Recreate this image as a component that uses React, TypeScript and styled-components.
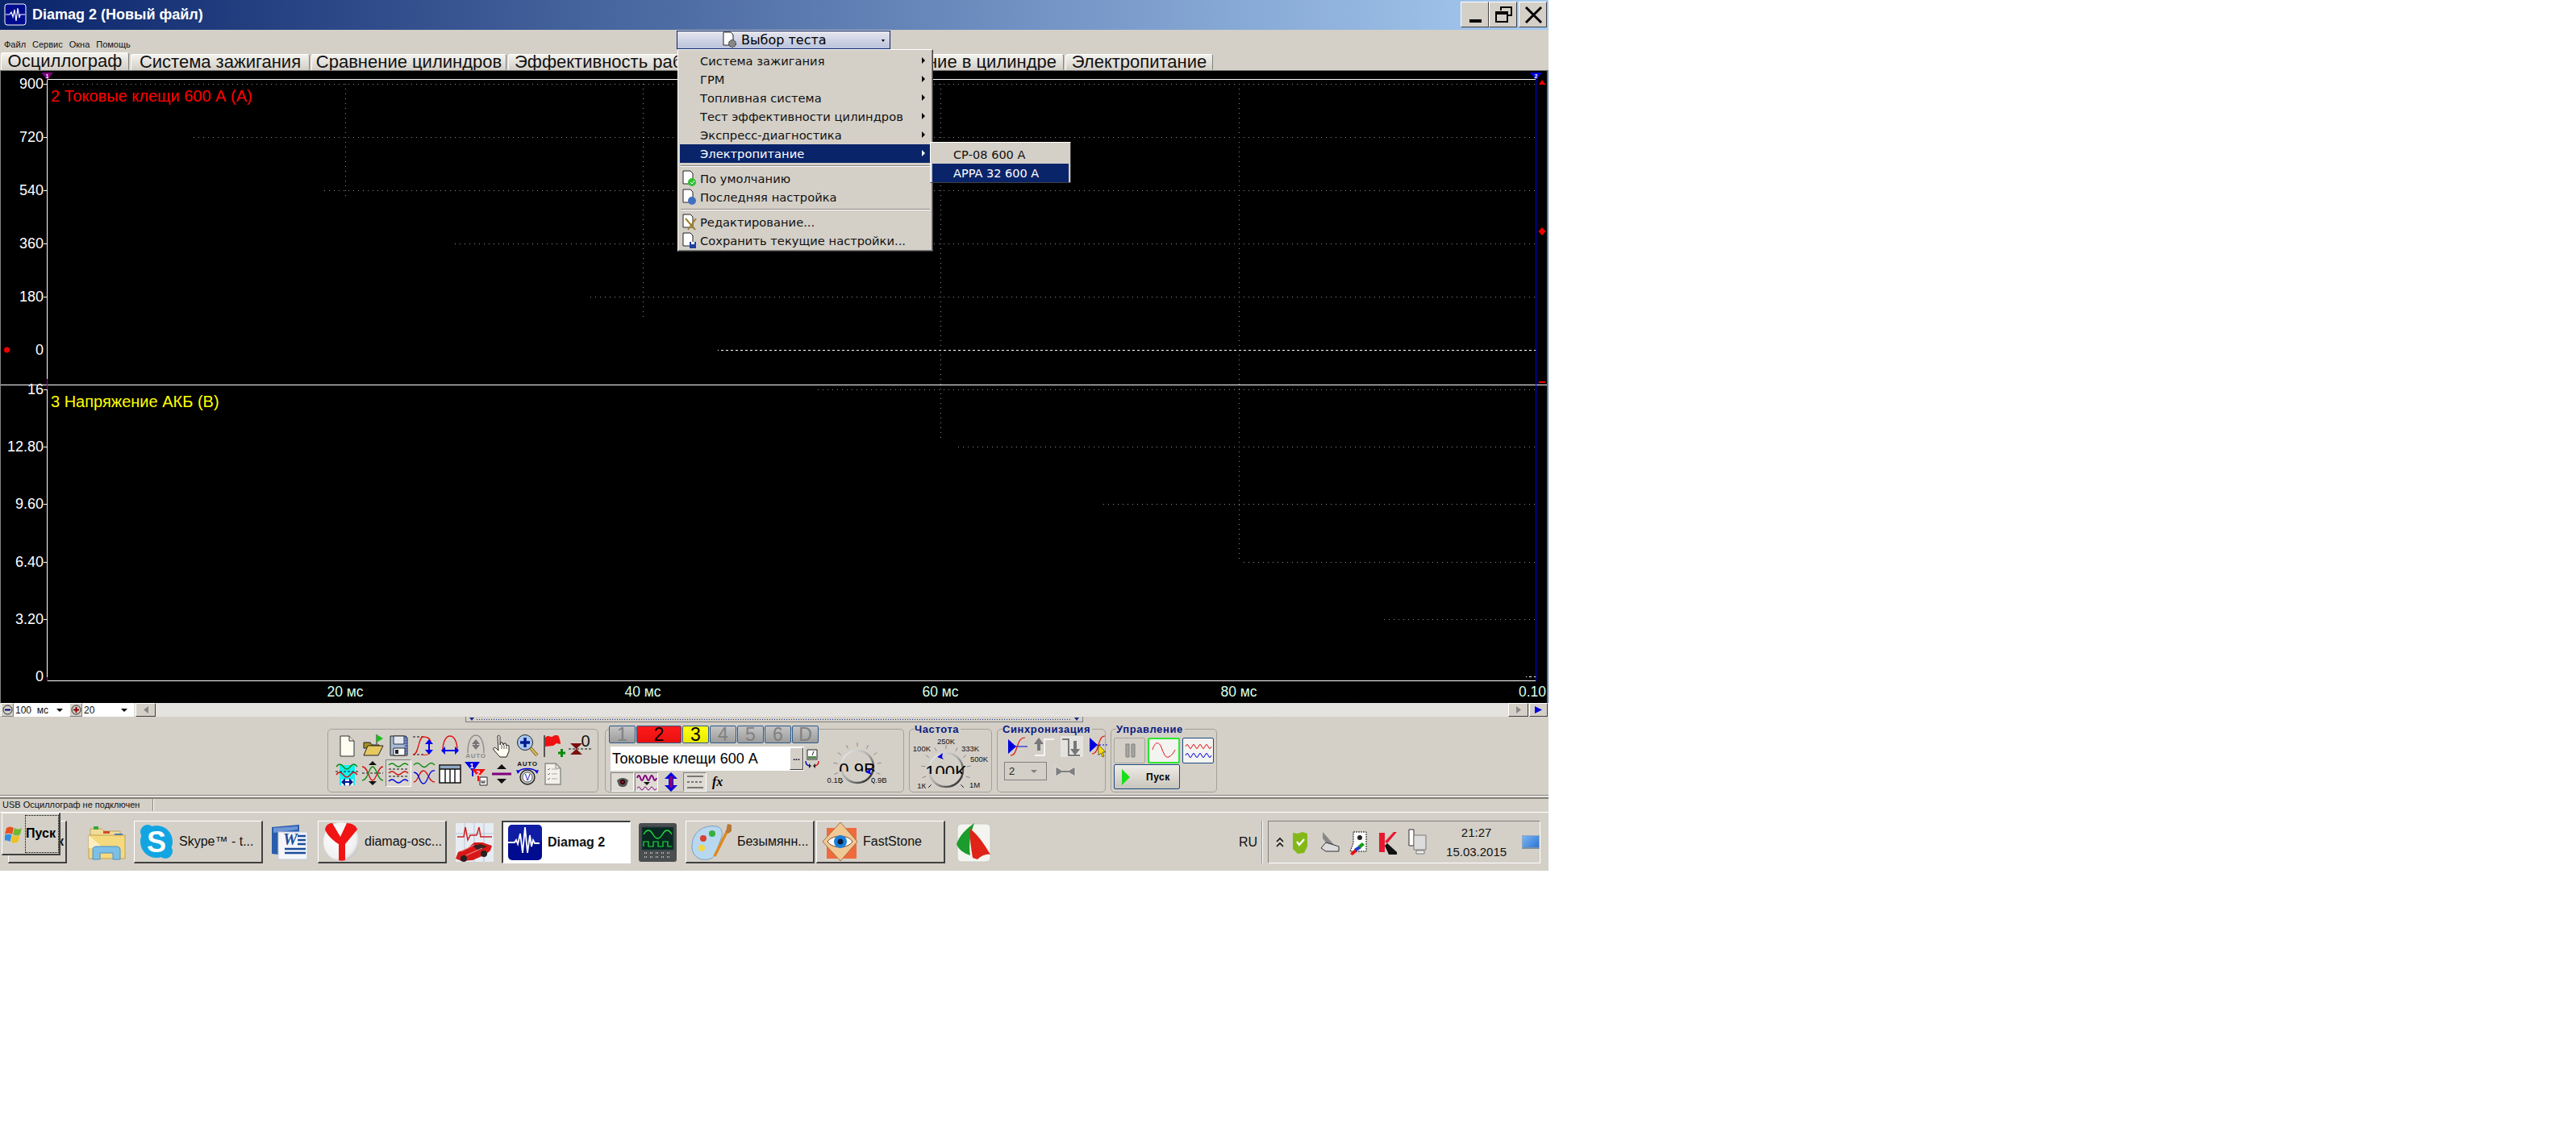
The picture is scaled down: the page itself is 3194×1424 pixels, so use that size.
import React from "react";
import styled, { createGlobalStyle } from "styled-components";

const GREY = "#d4d0c8";
const NAVY = "#0a246a";

const GRID_X = [428, 797, 1166, 1536];
const GRID_Y = [104, 170, 236, 302, 368, 483, 554, 625, 697, 768];
const ZERO_Y = [434, 839];

// dotted chart grid as background layers; offsets are relative to the chart's top-left (1, 88)
const gridLayers = [
  ...ZERO_Y.map(
    (y) => `repeating-linear-gradient(to right, #fff 0 3px, transparent 3px 6px) 59px ${y - 88}px / 1844px 1px no-repeat`
  ),
  ...GRID_X.map(
    (x) => `repeating-linear-gradient(to bottom, #8c8c8c 0 1px, transparent 1px 6px) ${x - 1}px 16px / 1px 744px no-repeat`
  ),
  ...GRID_Y.map(
    (y) => `repeating-linear-gradient(to right, #8c8c8c 0 1px, transparent 1px 6px) 59px ${y - 88}px / 1844px 1px no-repeat`
  ),
].join(", ");

const GlobalStyle = createGlobalStyle`
  html, body { margin: 0; background: #fff; }
  * { box-sizing: border-box; }
`;

const Page = styled.div`
  position: relative;
  width: 1920px;
  height: 1080px;
  background: ${GREY};
  font-family: "Liberation Sans", Arial, sans-serif;
  overflow: hidden;
  display: flex;
  flex-direction: column;
`;

const TitleBar = styled.div`
  height: 37px;
  padding: 2px 2px 3px 5px;
  display: flex;
  align-items: center;
  background: linear-gradient(to right, ${NAVY}, #a6caf0);
  color: #fff;
`;

const TitleText = styled.span`
  margin-left: 7px;
  font-size: 18px;
  font-weight: 700;
  flex: 1;
`;

const WinButton = styled.button<{ $gap?: number }>`
  width: 35px;
  height: 32px;
  margin-left: ${(p) => p.$gap ?? 0}px;
  padding: 0;
  display: flex;
  align-items: center;
  justify-content: center;
  background: ${GREY};
  border: 1px solid;
  border-color: #fff #404040 #404040 #fff;
`;

const MenuBar = styled.div`
  height: 28px;
  display: flex;
  padding-top: 1px;
`;

const MenuItems = styled.div`
  width: 839px;
  padding: 9px 0 0 5px;
  display: flex;
  gap: 8px;
  font-size: 11px;
  line-height: 16px;
  color: #111;
`;

const TestButton = styled.div`
  width: 265px;
  height: 23px;
  display: flex;
  align-items: center;
  padding-left: 55px;
  gap: 2px;
  border: 1px solid ${NAVY};
  background: linear-gradient(to bottom, #e6e6ee, #b9c2dc);
  font: 16px "DejaVu Sans", sans-serif;
  color: #000;
  position: relative;
  white-space: nowrap;
`;

const TinyArrow = styled.span`
  position: absolute;
  right: 6px;
  top: 10px;
  border: 2.5px solid transparent;
  border-top: 3px solid #000;
`;

const TabRow = styled.div`
  height: 22px;
  display: flex;
  align-items: flex-end;
  padding-left: 1px;
  gap: 2px;
`;

const Tab = styled.div<{ $w: number; $active?: boolean; $align?: string }>`
  width: ${(p) => p.$w}px;
  height: ${(p) => (p.$active ? 22 : 20)}px;
  display: flex;
  align-items: center;
  justify-content: ${(p) => p.$align ?? "center"};
  padding: ${(p) => (p.$align === "flex-end" ? "0 8px 0 0" : p.$align ? "0 0 0 7px" : "0")};
  border: 1px solid;
  border-color: #fff #808080 ${GREY} #fff;
  border-radius: 3px 3px 0 0;
  background: linear-gradient(to bottom, #f4f3ef, #d4d0c8);
  font-size: 22px;
  line-height: 20px;
  color: #111;
  white-space: nowrap;
`;

const ChartBox = styled.div`
  height: 785px;
  background: ${gridLayers}, #000;
  border-top: 1px solid #6f6f6f;
  border-left: 1px solid #808080;
  border-right: 2px solid #5b7fa6;
  display: block;
`;

const ScrollRow = styled.div`
  height: 17px;
  display: flex;
  background: repeating-conic-gradient(#ffffff 0 25%, #c9c6bf 0 50%) 0 0 / 2px 2px;
  padding-left: 1px;
  padding-right: 1px;
`;

const RoundBtn = styled.div`
  width: 16px;
  height: 17px;
  background: ${GREY};
  border: 1px solid;
  border-color: #fff #808080 #808080 #fff;
  display: flex;
  align-items: center;
  justify-content: center;
`;

const ZoomCombo = styled.div<{ $w: number }>`
  width: ${(p) => p.$w}px;
  height: 17px;
  background: #fff;
  display: flex;
  align-items: center;
  padding: 0 8px 0 2px;
  font-size: 12px;
  color: #111;
`;

const ComboValue = styled.span`
  flex: 1;
  white-space: pre;
`;

const ComboArrow = styled.span<{ $c?: string }>`
  width: 0;
  height: 0;
  border: 4px solid transparent;
  border-top: 4px solid ${(p) => p.$c ?? "#000"};
  border-bottom: 0;
`;

const ScrollBtn = styled.div<{ $w?: number; $gap?: number }>`
  width: ${(p) => p.$w ?? 25}px;
  height: 17px;
  margin-left: ${(p) => p.$gap ?? 0}px;
  background: ${GREY};
  border: 1px solid;
  border-color: #fff #404040 #404040 #fff;
  display: flex;
  align-items: center;
  justify-content: center;
`;

const ScrollSpace = styled.div`
  flex: 1;
`;

const Toolbar = styled.div`
  height: 98px;
  border-bottom: 1px solid #807d78;
  box-shadow: 0 1px 0 #fff, 0 2px 0 ${GREY}, 0 3px 0 #807d78;
`;

const Strip = styled.div`
  margin-left: 577px;
  width: 766px;
  height: 7px;
  border: 1px solid #808080;
  border-top: 0;
  background: ${GREY};
  display: flex;
  align-items: center;
  justify-content: space-between;
  padding: 0 4px;
`;

const StripDots = styled.div`
  flex: 1;
  margin: 0 3px;
  height: 1px;
  background: repeating-linear-gradient(to right, #1a3c9a 0 1px, transparent 1px 3px);
`;

const StripMark = styled.span`
  width: 0;
  height: 0;
  border: 3px solid transparent;
  border-top: 4px solid #1a2a8a;
  border-bottom: 0;
`;

const Groups = styled.div`
  margin-top: 8px;
  padding-left: 406px;
  display: flex;
  gap: 6px;
`;

const Group = styled.div<{ $w: number; $after?: number }>`
  position: relative;
  width: ${(p) => p.$w}px;
  height: 79px;
  margin-right: ${(p) => p.$after ?? 0}px;
  border: 1px solid #a4a19a;
  border-radius: 5px;
`;

const Legend = styled.span`
  position: absolute;
  left: 6px;
  top: -8px;
  background: ${GREY};
  padding-right: 2px;
  font-size: 13px;
  line-height: 15px;
  font-weight: 700;
  letter-spacing: 0.6px;
  color: #0b1a80;
  white-space: nowrap;
`;

const IconGrid = styled.div`
  display: grid;
  grid-template-columns: repeat(10, 32px);
  grid-auto-rows: 34px;
  padding: 3px 0 0 7px;
`;

const IconCell = styled.div<{ $sunken?: boolean }>`
  display: flex;
  align-items: center;
  justify-content: center;
  ${(p) => p.$sunken && `border: 1px solid; border-color: #808080 #fff #fff #808080; background: #dad7d0;`}
`;

const ChannelWrap = styled.div`
  margin: -5px 0 0 4px;
`;

const Channels = styled.div`
  display: flex;
  gap: 1px;
  height: 22px;
`;

const Channel = styled.div<{ $c?: string; $w?: number }>`
  width: ${(p) => p.$w ?? 33}px;
  border: 1px solid #2c5a8c;
  border-radius: 2px;
  background: ${(p) =>
    p.$c === "red"
      ? "linear-gradient(#ff1a1a,#e81010)"
      : p.$c === "yellow"
      ? "linear-gradient(#ffff10,#eaea00)"
      : "linear-gradient(#c4c4c4,#9c9c9c)"};
  color: ${(p) => (p.$c ? "#000" : "#808080")};
  font-size: 23px;
  line-height: 20px;
  text-align: center;
`;

const SensorRow = styled.div`
  margin: 4px 0 0 2px;
  display: flex;
  align-items: center;
`;

const SensorCombo = styled.div`
  width: 240px;
  height: 30px;
  background: #fff;
  display: flex;
  align-items: center;
  padding: 0 1px 0 2px;
  font-size: 18px;
  color: #000;
`;

const SensorName = styled.span`
  flex: 1;
`;

const DotsBtn = styled.div`
  width: 17px;
  height: 28px;
  background: ${GREY};
  border: 1px solid;
  border-color: #fff #404040 #404040 #fff;
  font-size: 10px;
  font-weight: 700;
  text-align: center;
  line-height: 24px;
`;

const ModeRow = styled.div`
  margin: 2px 0 0 2px;
  display: flex;
  align-items: center;
  gap: 1px;
  height: 24px;
`;

const ModeBtn = styled.div<{ $flat?: boolean; $w?: number }>`
  width: ${(p) => p.$w ?? 29}px;
  height: 24px;
  display: flex;
  align-items: center;
  justify-content: center;
  ${(p) =>
    !p.$flat &&
    `border: 1px solid; border-color: #808080 #fff #fff #808080; background: #dedbd4;`}
`;

const FxLabel = styled.span`
  margin-left: 6px;
  font: italic 700 16px "Liberation Serif", serif;
  color: #000;
`;

const GroupSplit = styled.div`
  display: flex;
  height: 100%;
`;

const Knob = styled.div`
  margin-left: auto;
  margin-right: 7px;
`;

const SyncRow = styled.div`
  display: flex;
  align-items: center;
  padding: 8px 0 0 10px;
  gap: 6px;
`;

const SyncIcon = styled.div<{ $pressed?: boolean }>`
  width: 29px;
  height: 26px;
  display: flex;
  align-items: center;
  justify-content: center;
  ${(p) => p.$pressed && `background: repeating-conic-gradient(#fff 0 25%, #c9c6bf 0 50%) 0 0 / 2px 2px;`}
`;

const SyncRow2 = styled.div`
  display: flex;
  align-items: center;
  padding: 6px 0 0 8px;
  gap: 10px;
`;

const SyncCombo = styled.div`
  width: 53px;
  height: 23px;
  border: 1px solid #808080;
  display: flex;
  align-items: center;
  padding: 0 11px 0 5px;
  font-size: 13px;
  color: #222;
`;

const ControlGrid = styled.div`
  display: grid;
  grid-template-columns: 39px 40px 39px;
  grid-template-rows: 32px 31px;
  gap: 1px 3px;
  padding: 10px 0 0 3px;
`;

const CtlBtn = styled.div<{ $kind?: string }>`
  display: flex;
  align-items: center;
  justify-content: center;
  border-radius: 2px;
  border: ${(p) =>
    p.$kind === "green" ? "2px solid #2ee62e" : p.$kind === "navy" ? "1px solid #1c4a80" : "1px solid #a8a59e"};
  background: ${(p) => (p.$kind ? "#f3f3f1" : GREY)};
`;

const StartBtn = styled.div`
  grid-column: 1 / span 2;
  display: flex;
  align-items: center;
  padding-left: 9px;
  border: 1px solid #1c4a80;
  border-radius: 2px;
  background: linear-gradient(#eeece6, #c8c5bd);
  font-size: 12px;
  font-weight: 700;
  color: #000;
`;

const StartText = styled.span`
  margin-left: 20px;
  letter-spacing: 0.5px;
`;

const StatusBar = styled.div`
  margin-top: 3px;
  height: 16px;
  display: flex;
  font-size: 11px;
  line-height: 15px;
  color: #111;
`;

const StatusCell = styled.div`
  width: 190px;
  padding-left: 3px;
  border-right: 1px solid #8a8780;
  box-shadow: 1px 0 0 #fff;
  border-top: 1px solid #8a8780;
`;

const StatusRest = styled.div`
  flex: 1;
  border-top: 1px solid #8a8780;
`;

const Taskbar = styled.div`
  border-top: 1px solid #fff;
  margin-top: 1px;
  flex: 1;
  display: flex;
  align-items: flex-start;
  padding: 10px 10px 0 10px;
`;

const TaskBtn = styled.div<{ $w?: number; $active?: boolean; $gap?: number }>`
  width: ${(p) => p.$w ?? 160}px;
  height: 53px;
  margin-left: ${(p) => p.$gap ?? 0}px;
  flex: none;
  display: flex;
  align-items: center;
  padding-left: 5px;
  gap: 6px;
  border: 1px solid;
  border-width: ${(p) => (p.$active ? "2px 1px 1px 2px" : "1px 2px 2px 1px")};
  border-color: ${(p) => (p.$active ? "#404040 #fff #fff #404040" : "#fff #404040 #404040 #fff")};
  background: ${(p) => (p.$active ? "#fff" : GREY)};
  font-size: 16px;
  font-weight: ${(p) => (p.$active ? 700 : 400)};
  color: #111;
  white-space: nowrap;
  overflow: hidden;
`;

const BackBtn = styled(TaskBtn)`
  justify-content: flex-end;
  padding-right: 2px;
  font-weight: 700;
  font-size: 16px;
`;

const FreeIcon = styled.div<{ $gap: number; $w: number }>`
  margin-left: ${(p) => p.$gap}px;
  width: ${(p) => p.$w}px;
  height: 53px;
  flex: none;
  display: flex;
  align-items: center;
  justify-content: center;
`;

const WinStart = styled.div`
  position: absolute;
  left: 2px;
  top: 1008px;
  width: 73px;
  height: 53px;
  display: flex;
  align-items: center;
  padding-left: 3px;
  background: ${GREY};
  border: 1px solid;
  border-width: 1px 2px 2px 1px;
  border-color: #fff #404040 #404040 #fff;
  font-size: 16px;
  font-weight: 700;
  color: #000;
`;

const StartLabel = styled.span`
  border: 1px dotted #000;
  height: 47px;
  width: 42px;
  margin-left: 3px;
  display: flex;
  align-items: center;
  white-space: nowrap;
`;

const Lang = styled.div`
  margin-left: auto;
  height: 53px;
  display: flex;
  align-items: center;
  padding-right: 5px;
  border-right: 1px solid #9a978f;
  box-shadow: 1px 0 0 #fff;
  font-size: 16px;
  color: #111;
  width: 29px;
  flex: none;
`;

const Tray = styled.div`
  margin-left: 7px;
  width: 338px;
  height: 53px;
  flex: none;
  display: flex;
  align-items: center;
  padding-left: 9px;
  border: 1px solid;
  border-color: #808080 #fff #fff #808080;
`;

const TraySlot = styled.div<{ $w: number }>`
  width: ${(p) => p.$w}px;
  height: 30px;
  display: flex;
  align-items: center;
  justify-content: center;
  flex: none;
`;

const Clock = styled.div`
  margin-left: 8px;
  width: 96px;
  display: flex;
  flex-direction: column;
  gap: 8px;
  align-items: center;
  font-size: 15px;
  line-height: 16px;
  color: #111;
`;

const Desk = styled.div`
  margin-left: 9px;
  width: 22px;
  height: 17px;
  background: linear-gradient(135deg, #7ab4f0, #2e76d6);
  border: 1px solid #8fa8c4;
  border-bottom: 2px solid #7f8fa0;
`;

const Dropdown = styled.div`
  position: absolute;
  left: 840px;
  top: 61px;
  width: 317px;
  height: 251px;
  padding: 2px;
  background: ${GREY};
  border: 1px solid;
  border-color: #fff #404040 #404040 #fff;
  box-shadow: inset -1px -1px 0 #808080;
  font: 14.700px "DejaVu Sans", sans-serif;
  color: #111;
`;

const MenuRow = styled.div<{ $hot?: boolean }>`
  position: relative;
  height: 23px;
  display: flex;
  align-items: center;
  padding-left: 25px;
  background: ${(p) => (p.$hot ? NAVY : "transparent")};
  color: ${(p) => (p.$hot ? "#fff" : "#111")};
  white-space: nowrap;
`;

const MenuIconSlot = styled.span`
  position: absolute;
  left: 2px;
  top: 1px;
`;

const SubArrow = styled.span<{ $hot?: boolean }>`
  position: absolute;
  right: 7px;
  top: 7px;
  border: 4px solid transparent;
  border-left: 4px solid ${(p) => (p.$hot ? "#fff" : "#000")};
  border-right: 0;
`;

const MenuSep = styled.div`
  height: 2px;
  margin: 3px 1px 3px;
  background: #8a8780;
  border-bottom: 1px solid #fff;
`;

const Submenu = styled.div`
  position: absolute;
  left: 1153px;
  top: 176px;
  width: 175px;
  height: 51px;
  padding: 3px 2px;
  background: ${GREY};
  border: 1px solid;
  border-color: #fff #404040 #404040 #fff;
  font: 14.500px "DejaVu Sans", sans-serif;
  color: #111;
`;

const SubRow = styled(MenuRow)`
  padding-left: 26px;
`;

const wave = (x0: number, x1: number, y: number, a: number, n: number) => {
  const step = (x1 - x0) / n;
  let d = `M${x0} ${y}`;
  for (let i = 0; i < n; i++) {
    const s = i % 2 ? a : -a;
    d += ` q${step / 2} ${s * 2} ${step} 0`;
  }
  return d;
};

const Ico = ({ children, w = 30, h = 32 }: { children: React.ReactNode; w?: number; h?: number }) => (
  <svg width={w} height={h} viewBox={`0 0 ${w} ${h}`} fill="none">
    {children}
  </svg>
);

const VArrow = ({ x, y0, y1, c = "#0000f0" }: { x: number; y0: number; y1: number; c?: string }) => (
  <>
    <path d={`M${x} ${y0 + 4}V${y1 - 4}`} stroke={c} strokeWidth="2" />
    <path d={`M${x - 5} ${y0 + 6}L${x} ${y0}L${x + 5} ${y0 + 6}zM${x - 5} ${y1 - 6}L${x} ${y1}L${x + 5} ${y1 - 6}z`} fill={c} />
  </>
);

const HArrow = ({ y, x0, x1, c = "#0000f0" }: { y: number; x0: number; x1: number; c?: string }) => (
  <>
    <path d={`M${x0 + 4} ${y}H${x1 - 4}`} stroke={c} strokeWidth="2" />
    <path d={`M${x0 + 5} ${y - 5}L${x0} ${y}L${x0 + 5} ${y + 5}zM${x1 - 5} ${y - 5}L${x1} ${y}L${x1 - 5} ${y + 5}z`} fill={c} />
  </>
);

const rowOne = [
  <Ico key="new">
    <path d="M7 4h11l6 6v19H7z" fill="#fffdf0" stroke="#333" />
    <path d="M18 4v6h6" stroke="#333" fill="#e8e6da" />
  </Ico>,
  <Ico key="open">
    <path d="M20 2v12" stroke="#222" />
    <path d="M20 2l8 5-8 5z" fill="#16c016" />
    <path d="M4 12h8l2 3h9v4H4z" fill="#a89020" stroke="#222" />
    <path d="M4 28l5-12h19l-6 12z" fill="#e6c860" stroke="#222" />
  </Ico>,
  <Ico key="save">
    <path d="M5 4h19l2 2v22H5z" fill="#a8bcd8" stroke="#222" />
    <path d="M9 4h13v10H9z" fill="#e4e8f0" stroke="#333" />
    <path d="M24 5v22" stroke="#2040c0" strokeWidth="3" strokeDasharray="1 1" />
    <path d="M9 19h14v9H9z" fill="#fff" stroke="#222" />
    <path d="M11 21h4v5h-4z" fill="#222" />
  </Ico>,
  <Ico key="range">
    <path d="M1 5h14M1 27h14" stroke="#111" strokeDasharray="3 2" />
    <path d="M1 27c8 0 6-22 13-22 5 0 8 2 9 6" stroke="#e01010" strokeWidth="1.3" />
    <VArrow x={21} y0={8} y1={27} />
    <path d="M12 27c4 1 8 0 9-1" stroke="#e01010" />
  </Ico>,
  <Ico key="span">
    <path d="M6 22C6 11 10 4 15 4s9 7 9 18" stroke="#e01010" strokeWidth="1.4" />
    <HArrow y={22} x0={4} x1={26} />
  </Ico>,
  <Ico key="auto">
    <path d="M5 25C5 11 9 3 15 3s10 8 10 22" stroke="#8c8c8c" strokeWidth="1.4" />
    <VArrow x={15} y0={8} y1={21} c="#777" />
    <text x="15" y="31" fontSize="8" fontWeight="700" textAnchor="middle" fill="#8a8a8a" fontFamily="Liberation Sans" letterSpacing="0.8">AUTO</text>
  </Ico>,
  <Ico key="hand">
    <path d="M10 4c2-2 3 0 3 2v9l1-3h2l1 3 1-2h2l1 3 1-1 2 1v7l-3 7H13l-8-9c-1-3 1-3 3-2l3 3z" fill="#fffdf0" stroke="#222" />
    <path d="M15 15v5M18 15v5M21 15v5" stroke="#555" />
  </Ico>,
  <Ico key="zoom">
    <path d="M18 18l9 10" stroke="#7a6018" strokeWidth="4" />
    <path d="M18 18l9 10" stroke="#e0c060" strokeWidth="2" />
    <circle cx="12" cy="12" r="9.5" fill="#a8c8f0" stroke="#222" />
    <path d="M12 6v12M6 12h12" stroke="#001a90" strokeWidth="3.4" />
  </Ico>,
  <Ico key="flag">
    <path d="M4 3v27" stroke="#222" strokeWidth="1.4" />
    <path d="M5 6c4-5 7 1 10-2 2-2 4 0 6-1 2 4 3 8 3 11l-5-1-4 3-10 1z" fill="#f01010" />
    <path d="M21 25h9M25.500 20v10" stroke="#0a8a0a" strokeWidth="3" />
  </Ico>,
  <Ico key="zero">
    <path d="M4 13h15L11.500 20zM4 27h15l-7.500-7z" fill="#7a1010" />
    <path d="M2 20h28" stroke="#111" strokeDasharray="3 2" />
    <text x="23" y="17" fontSize="20" textAnchor="middle" fill="#111" fontFamily="Liberation Sans">0</text>
  </Ico>,
];

const rowTwo = [
  <Ico key="cursor">
    <path d="M6 6h19v25H6z" fill="#14f0f0" />
    <path d={wave(2, 28, 8, 3, 3)} stroke="#118a11" strokeWidth="1.4" />
    <path d="M1 14h28" stroke="#111" strokeDasharray="3 2" />
    <path d={wave(2, 28, 18, 3, 3)} stroke="#d01010" strokeWidth="1.4" />
    <path d="M8 24h15v7H8z" fill="#fff" />
    <HArrow y={27} x0={8} x1={23} c="#001a90" />
  </Ico>,
  <Ico key="cross">
    <path d="M15 1l5 5H10zM15 31l5-5H10z" fill="#111" />
    <path d="M2 16h26" stroke="#111" strokeDasharray="3 2" />
    <path d="M2 8c8 0 8 17 13 17s6-17 13-17" stroke="#d01010" strokeWidth="1.3" />
    <path d="M2 25c8 0 8-17 13-17s6 17 13 17" stroke="#118a11" strokeWidth="1.3" />
  </Ico>,
  <Ico key="stack">
    <path d={wave(3, 27, 6, 2, 3)} stroke="#118a11" strokeWidth="1.3" />
    <path d="M3 11h24M3 20h24" stroke="#111" strokeDasharray="3 2" />
    <path d={wave(3, 27, 16, 2, 3)} stroke="#d01010" strokeWidth="1.3" />
    <path d={wave(3, 27, 26, 2, 3)} stroke="#0000e0" strokeWidth="1.3" />
  </Ico>,
  <Ico key="over">
    <path d={wave(2, 28, 6, 2.500, 3)} stroke="#118a11" strokeWidth="1.3" />
    <path d="M2 27c6 0 6-14 12-14s6 14 14 14" stroke="#d01010" strokeWidth="1.3" />
    <path d="M2 15c8 0 6 14 12 14s6-18 14-16" stroke="#0000e0" strokeWidth="1.3" />
  </Ico>,
  <Ico key="table">
    <path d="M2 6h26v22H2z" fill="#fff" stroke="#111" strokeWidth="1.5" />
    <path d="M3 7h24v4H3z" fill="#90a8c8" />
    <path d="M2 11h26M9 11v17M15 11v17M21 11v17" stroke="#111" strokeWidth="1.4" />
  </Ico>,
  <Ico key="funnel">
    <path d="M1 2h19l-8 11v7h-2v-7z" fill="#0000e0" />
    <text x="10" y="10" fontSize="9" fontWeight="700" textAnchor="middle" fill="#fff" fontFamily="Liberation Sans">1</text>
    <path d="M10 11h17l-8 9v6h-2v-6z" fill="#f01010" />
    <text x="18" y="19" fontSize="9" fontWeight="700" textAnchor="middle" fill="#fff" fontFamily="Liberation Sans">2</text>
    <path d="M20 21h9v10h-9z" fill="#fff" stroke="#222" />
    <path d="M22 25v3h2v-3M24 28h2v-3" stroke="#333" />
  </Ico>,
  <Ico key="level">
    <path d="M15 5l6 6H9zM15 29l6-6H9z" fill="#111" />
    <path d="M3 17h24" stroke="#800080" strokeWidth="3" />
  </Ico>,
  <Ico key="autov">
    <text x="15" y="7" fontSize="8" fontWeight="700" textAnchor="middle" fill="#111" fontFamily="Liberation Sans" letterSpacing="0.8">AUTO</text>
    <path d="M3 15c4-6 20-6 24 0" stroke="#0000e0" strokeWidth="1.6" />
    <path d="M1 12l5 1-3 4zM29 12l-5 1 3 4z" fill="#0000e0" />
    <circle cx="15" cy="21" r="9" fill="#c8c8c8" stroke="#222" strokeWidth="1.4" />
    <circle cx="15" cy="21" r="6" fill="#fff" stroke="#555" />
    <text x="15" y="25" fontSize="10" textAnchor="middle" fill="#0000c0" fontFamily="Liberation Sans">V</text>
  </Ico>,
  <Ico key="report">
    <path d="M5 4h13l6 6v20H5z" fill="#f2f0e8" stroke="#8a8a86" strokeWidth="1.4" />
    <path d="M18 4v6h6" stroke="#8a8a86" />
    <path d="M8 11l1 1 2-2M8 17l1 1 2-2M8 23l1 1 2-2" stroke="#777" />
    <path d="M13 11h7M13 17h7M13 23h7" stroke="#aaa" />
  </Ico>,
];

const Plot = () => {
  const top = [
    ["900", 104],
    ["720", 170],
    ["540", 236],
    ["360", 302],
    ["180", 368],
  ] as const;
  const bottom = [
    ["16", 483],
    ["12.80", 554],
    ["9.60", 625],
    ["6.40", 697],
    ["3.20", 768],
  ] as const;
  return (
    <svg width="1917" height="784" viewBox="1 88 1917 784" shapeRendering="crispEdges" style={{ display: "block" }}>
      {[...top, ...bottom].map(([t, y]) => (
        <g key={t}>
          <path d={`M54 ${y}.5H58`} stroke="#fff" />
          <text x="54" y={y + 6} textAnchor="end" fontSize="18" fill="#fff" fontFamily="Liberation Sans">{t}</text>
        </g>
      ))}
      <text x="54" y="440" textAnchor="end" fontSize="18" fill="#fff" fontFamily="Liberation Sans">0</text>
      <text x="54" y="845" textAnchor="end" fontSize="18" fill="#fff" fontFamily="Liberation Sans">0</text>
      <path d="M58.500 98V844.500H1904M58 98.500H1904M1 477.500H1918" stroke="#fff" />
      <path d="M58.500 470V483M58.500 840V845" stroke="#a000a0" />
      <path d="M1904.500 97V845" stroke="#0000ff" />
      <g shapeRendering="auto">
        <path d="M51 90h15l-7.500 9z" fill="#800080" />
        <text x="58.500" y="97" fontSize="7" fontWeight="700" textAnchor="middle" fill="#fff" fontFamily="Liberation Sans">1</text>
        <path d="M1897 90h15l-7.500 9z" fill="#0000e0" />
        <text x="1904.500" y="97" fontSize="7" fontWeight="700" textAnchor="middle" fill="#fff" fontFamily="Liberation Sans">2</text>
        <path d="M1908 105l4-6 4.500 6z" fill="#f00000" />
        <path d="M1912 282l4.500 5-4.500 5-4.500-5z" fill="#f00000" />
        <path d="M1908 473h8v2h-8z" fill="#f00000" />
        <circle cx="8.500" cy="434" r="3.500" fill="#f00000" />
        <text x="63" y="126" fontSize="20" fill="#ff0000" fontFamily="Liberation Sans">2 Токовые клещи 600 А (А)</text>
        <text x="63" y="505" fontSize="20" fill="#ffff00" fontFamily="Liberation Sans">3 Напряжение АКБ (В)</text>
        {GRID_X.map((x, i) => (
          <text key={x} x={x} y="864" fontSize="17.500" textAnchor="middle" fill="#d8ffe8" fontFamily="Liberation Sans">{`${(i + 1) * 20} мс`}</text>
        ))}
        <text x="1917" y="864" fontSize="17.500" textAnchor="end" fill="#d8ffe8" fontFamily="Liberation Sans">0.10</text>
      </g>
    </svg>
  );
};

const Dial = ({
  w,
  h,
  cx,
  cy,
  r,
  value,
  marks,
  pointer,
  size,
  baseline,
}: {
  w: number;
  h: number;
  cx: number;
  cy: number;
  r: number;
  value: string;
  marks: [string, number, number, string][];
  pointer: [number, number];
  size: number;
  baseline: number;
}) => {
  const id = `clip${value.replace(/\W/g, "")}`;
  const gid = `g${id}`;
  const ticks = Array.from({ length: 11 }, (_, i) => {
    const a = ((135 + i * 27) * Math.PI) / 180;
    return (
      <line
        key={i}
        x1={cx + Math.cos(a) * (r + 5)}
        y1={cy + Math.sin(a) * (r + 5)}
        x2={cx + Math.cos(a) * (r + 10)}
        y2={cy + Math.sin(a) * (r + 10)}
        stroke={i === 0 || i === 10 ? "#111" : "#8a8a8a"}
      />
    );
  });
  return (
    <svg width={w} height={h} viewBox={`0 0 ${w} ${h}`} style={{ display: "block" }}>
      <defs>
        <linearGradient id={gid} x1="0" y1="0" x2="1" y2="1">
          <stop offset="0" stopColor="#f4f4f4" />
          <stop offset="0.5" stopColor="#a8a8a8" />
          <stop offset="1" stopColor="#111" />
        </linearGradient>
        <clipPath id={id}>
          <rect x="0" y="0" width={w} height={baseline - 5} />
        </clipPath>
      </defs>
      {ticks}
      <circle cx={cx} cy={cy} r={r} fill="none" stroke={`url(#${gid})`} strokeWidth="2.5" />
      <text x={cx} y={baseline} clipPath={`url(#${id})`} fontSize={size} textAnchor="middle" fill="#000" fontFamily="Liberation Sans">{value}</text>
      <path d={`M${pointer[0]} ${pointer[1]}l7-5-1 5 2 3z`} fill="#0000e0" />
      {marks.map(([t, x, y, anchor]) => (
        <text key={t} x={x} y={y} fontSize="9.500" textAnchor={anchor as "start"} fill="#111" fontFamily="Liberation Sans">{t}</text>
      ))}
    </svg>
  );
};

const DocIcon = ({ badge }: { badge: React.ReactNode }) => (
  <Ico w={22} h={22}>
    <path d="M2 1h9l3 3v13H2z" fill="#fff" stroke="#222" />
    {badge}
  </Ico>
);

const TaskIcons = {
  folder: (
    <Ico w={49} h={46}>
      <path d="M4 6h14l3 3h20v8H4z" fill="#f0dc9a" stroke="#b8a060" />
      <path d="M8 3h6v4H8z" fill="#38a838" />
      <path d="M20 9h8v3h-8z" fill="#d84828" />
      <path d="M34 12h10v3H34z" fill="#3070d0" />
      <path d="M2 14h45v29H2z" fill="#f5d97e" stroke="#c0a050" />
      <path d="M2 14L20 30 2 30z" fill="#fbeec0" />
      <path d="M7 44V32c0-3 2-4 5-4h24c3 0 5 1 5 4v12h-9v-8H16v8z" fill="#7cc0e8" stroke="#4a90c0" />
    </Ico>
  ),
  skype: (
    <Ico w={44} h={46}>
      <circle cx="22" cy="23" r="20" fill="#12a5e2" />
      <circle cx="11" cy="11" r="9" fill="#12a5e2" />
      <circle cx="33" cy="35" r="9" fill="#12a5e2" />
      <text x="22" y="36" fontSize="36" fontWeight="700" textAnchor="middle" fill="#fff" fontFamily="Liberation Sans">S</text>
    </Ico>
  ),
  word: (
    <Ico w={50} h={48}>
      <path d="M2 5l34-3v40L2 38z" fill="#2a5cac" />
      <path d="M4 6l30-2v4L4 12z" fill="#6d94d4" />
      <path d="M10 11h36v34l-10 0H10z" fill="#f4f6fa" stroke="#c0c8d8" />
      <text x="25" y="27" fontSize="20" fontWeight="700" fontStyle="italic" textAnchor="middle" fill="#1c4c9c" fontFamily="Liberation Serif">W</text>
      <path d="M34 16h10M34 21h10M34 26h10M18 32h26M18 37h26" stroke="#1c4c9c" strokeWidth="2.6" />
    </Ico>
  ),
  yandex: (
    <Ico w={46} h={50}>
      <defs>
        <radialGradient id="yx" cx="0.4" cy="0.4" r="0.7">
          <stop offset="0" stopColor="#ffffff" />
          <stop offset="0.75" stopColor="#f0f0f0" />
          <stop offset="1" stopColor="#a8a8a8" />
        </radialGradient>
      </defs>
      <ellipse cx="23" cy="25" rx="22" ry="24" fill="url(#yx)" />
      <path d="M3 10c1-6 5-8 9-8l10 17L30 2c6 0 12 3 13 8L28 28v20c-3 1-6 1-8 0V28C16 26 6 18 3 10z" fill="#f01414" />
    </Ico>
  ),
  car: (
    <Ico w={49} h={50}>
      <path d="M1 1h47v48H1z" fill="#e6ecf2" />
      <path d="M12 1v48M24 1v48M36 1v48M1 14h47" stroke="#b8c4d4" />
      <path d="M3 18h8l2-12 3 16 3-6h8l3-10 2 12h14" stroke="#d02020" strokeWidth="1.5" />
      <path d="M1 45l3-8 12-5 8-7h10l12 4-2 6-6 5-16 7-14 1z" fill="#d81818" />
      <path d="M22 29l10-2 8 3-11 5z" fill="#3a2424" />
      <path d="M8 36l16-8M14 41l20-9" stroke="#f0a0a0" />
      <circle cx="11" cy="45" r="4" fill="#222" />
      <circle cx="36" cy="39" r="4" fill="#222" />
    </Ico>
  ),
  diamag: (
    <Ico w={44} h={46}>
      <rect x="1" y="1" width="42" height="44" rx="5" fill="#000c90" />
      <rect x="1" y="1" width="42" height="22" rx="5" fill="#2438c0" opacity=".4" />
      <path d="M1 23h8l2-3 2 5 3-13 3 24 3-32 3 32 3-22 2 14 2-8 2 4h6" stroke="#fff" strokeWidth="1.8" />
    </Ico>
  ),
  scope: (
    <Ico w={49} h={50}>
      <rect x="1" y="1" width="47" height="48" rx="3" fill="#4a4e50" />
      <rect x="5" y="6" width="39" height="28" fill="#082820" stroke="#203a40" />
      <path d={wave(7, 42, 15, 5, 3)} stroke="#20e040" strokeWidth="1.4" />
      <path d="M7 30v-6h6v6h6v-6h6v6h6v-6h6v6h5" stroke="#20e040" strokeWidth="1.2" />
      <path d="M8 38h4M15 38h4M22 38h4M29 38h4M36 38h4M8 43h4M15 43h4M22 43h4M29 43h4M36 43h4" stroke="#bbb" strokeWidth="2" strokeDasharray="1 1" />
    </Ico>
  ),
  paint: (
    <Ico w={52} h={48}>
      <path d="M2 30C2 12 16 3 32 5c6 1 8 6 7 12L32 38c-3 8-12 9-18 8C6 44 2 38 2 30z" fill="#b8d8f0" stroke="#7aa0c0" />
      <circle cx="14" cy="32" r="4" fill="#f4d840" />
      <circle cx="16" cy="20" r="4" fill="#d84030" />
      <circle cx="27" cy="14" r="4" fill="#38b038" />
      <path d="M30 42l16-32" stroke="#e08820" strokeWidth="3.5" />
      <path d="M44 12l2-10 5 1 0 8-4 3z" fill="#b87838" />
    </Ico>
  ),
  stone: (
    <Ico w={46} h={50}>
      <path d="M7 8h37v38H7z" fill="#ef6a3c" />
      <path d="M24 1l21 24-21 24L2 25z" fill="#f0c896" stroke="#a87038" />
      <path d="M8 25c6-9 26-9 31 0-6 9-25 9-31 0z" fill="#fff" stroke="#704020" />
      <circle cx="24" cy="25" r="8" fill="#1c80d8" />
      <circle cx="24" cy="25" r="3.500" fill="#08203c" />
    </Ico>
  ),
  green: (
    <Ico w={46} h={50}>
      <rect x="3" y="2" width="41" height="47" rx="5" fill="#f4f4f0" stroke="#c8c8c0" />
      <path d="M2 27C6 16 14 8 24 1l-2 6c-3 8-5 22-3 34C10 38 4 33 2 27z" fill="#1c9c2c" />
      <path d="M19 8c10 8 18 20 25 32-6-1-12 2-16 6l-6-2C20 32 18 20 19 8z" fill="#e02418" />
    </Ico>
  ),
};

const TrayIcons = [
  <Ico key="up" w={10} h={14}>
    <path d="M1 6l4-4 4 4M1 12l4-4 4 4" stroke="#111" strokeWidth="1.6" />
  </Ico>,
  <Ico key="g" w={24} h={30}>
    <path d="M3 3l6 1 6-2 6 2 0 16-4 8-8 1-6-6z" fill="#84b818" />
    <path d="M8 14l3 4 6-7" stroke="#fff" strokeWidth="2.2" />
  </Ico>,
  <Ico key="pr" w={26} h={30}>
    <path d="M4 2l16 18-8 0L4 10z" fill="#888" />
    <path d="M2 22l6-7 16 5 0 6H8z" fill="#dcdcdc" stroke="#333" />
  </Ico>,
  <Ico key="w" w={26} h={32}>
    <path d="M6 3h16v24H2l4-10z" fill="#fff" stroke="#111" strokeDasharray="2 1" />
    <circle cx="14" cy="10" r="3" fill="#222" />
    <path d="M2 30l6-6 3 3-6 5z" fill="#e81010" />
    <path d="M7 24l6-4 3 3-6 4z" fill="#2040d0" />
    <path d="M12 20l5-4 3 3-5 4z" fill="#10a010" />
  </Ico>,
  <Ico key="k" w={26} h={32}>
    <path d="M2 4h7v24H2z" fill="#e81830" />
    <path d="M9 15L20 3h4L12 17z" fill="#e81830" />
    <path d="M12 17l12 11v3H14L9 20z" fill="#111" />
  </Ico>,
  <Ico key="pc" w={24} h={34}>
    <path d="M2 1h6v20H2z" fill="#fff" stroke="#333" />
    <path d="M8 8h15v18H8z" fill="#dcdcdc" stroke="#777" />
    <path d="M11 27h10v4H11z" fill="#eee" stroke="#777" />
  </Ico>,
];

const Glyph = ({ c, d }: { c: string; d: string }) => (
  <svg width="13" height="13" viewBox="0 0 13 13">
    <circle cx="6.500" cy="6.500" r="5.500" fill="none" stroke="#222" />
    <path d={d} stroke={c} strokeWidth="2" />
  </svg>
);

const Win = ({ d, w = 2.5 }: { d: string; w?: number }) => (
  <svg width="24" height="24" viewBox="0 0 24 24" fill="none">
    <path d={d} stroke="#000" strokeWidth={w} />
  </svg>
);

export default function App() {
  return (
    <>
      <GlobalStyle />
      <Page>
        <TitleBar>
          <Ico w={28} h={28}>
            <rect x="1" y="1" width="26" height="26" rx="3" fill="#000c90" stroke="#fff" />
            <path d="M2 14h5l2-3 2 6 2-9 2 14 2-16 2 12 1-4h6" stroke="#fff" strokeWidth="1.2" />
          </Ico>
          <TitleText>Diamag 2 (Новый файл)</TitleText>
          <WinButton>
            <Win d="M5 20H20" w={4} />
          </WinButton>
          <WinButton>
            <Win d="M9 7V3H22V13H16M3 9H17V21H3zM3 11H17" w={2} />
          </WinButton>
          <WinButton $gap={2}>
            <Win d="M3 3L22 22M22 3L3 22" w={3} />
          </WinButton>
        </TitleBar>
        <MenuBar>
          <MenuItems>
            <span>Файл</span>
            <span>Сервис</span>
            <span>Окна</span>
            <span>Помощь</span>
          </MenuItems>
          <TestButton>
            <DocIcon badge={<circle cx="13" cy="15" r="4.500" fill="#888" stroke="#222" strokeDasharray="2 1" />} />
            Выбор теста
            <TinyArrow />
          </TestButton>
        </MenuBar>
        <TabRow>
          <Tab $w={159} $active>Осциллограф</Tab>
          <Tab $w={222}>Система зажигания</Tab>
          <Tab $w={242}>Сравнение цилиндров</Tab>
          <Tab $w={310} $align="flex-start">Эффективность работы</Tab>
          <Tab $w={377} $align="flex-end">Давление в цилиндре</Tab>
          <Tab $w={183}>Электропитание</Tab>
        </TabRow>
        <ChartBox>
          <Plot />
        </ChartBox>
        <ScrollRow>
          <RoundBtn>
            <Glyph c="#000080" d="M3 6.500H10" />
          </RoundBtn>
          <ZoomCombo $w={69}>
            <ComboValue>100  мс</ComboValue>
            <ComboArrow />
          </ZoomCombo>
          <RoundBtn>
            <Glyph c="#900000" d="M3 6.500H10M6.500 3V10" />
          </RoundBtn>
          <ZoomCombo $w={64}>
            <ComboValue>20</ComboValue>
            <ComboArrow />
          </ZoomCombo>
          <ScrollBtn $gap={2}>
            <svg width="6" height="9"><path d="M6 0v9L0 4.500z" fill="#888" /></svg>
          </ScrollBtn>
          <ScrollSpace />
          <ScrollBtn>
            <svg width="6" height="9"><path d="M0 0v9l6-4.500z" fill="#888" /></svg>
          </ScrollBtn>
          <ScrollBtn $gap={1} $w={23}>
            <svg width="9" height="9"><path d="M0 0v9l9-4.500z" fill="#0000e0" /></svg>
          </ScrollBtn>
        </ScrollRow>
        <Toolbar>
          <Strip>
            <StripMark />
            <StripDots />
            <StripMark />
          </Strip>
          <Groups>
            <Group $w={336} $after={2}>
              <IconGrid>
                {rowOne.map((icon) => (
                  <IconCell key={icon.key}>{icon}</IconCell>
                ))}
                {rowTwo.map((icon) => (
                  <IconCell key={icon.key} $sunken={icon.key === "stack"}>
                    {icon}
                  </IconCell>
                ))}
              </IconGrid>
            </Group>
            <Group $w={371}>
              <GroupSplit>
                <ChannelWrap>
                  <Channels>
                    <Channel>1</Channel>
                    <Channel $c="red" $w={56}>2</Channel>
                    <Channel $c="yellow">3</Channel>
                    <Channel>4</Channel>
                    <Channel>5</Channel>
                    <Channel>6</Channel>
                    <Channel>D</Channel>
                  </Channels>
                  <SensorRow>
                    <SensorCombo>
                      <SensorName>Токовые клещи 600 А</SensorName>
                      <DotsBtn>...</DotsBtn>
                    </SensorCombo>
                    <Ico w={20} h={26}>
                      <path d="M4 2h12v12H4z" fill="#fff" stroke="#222" />
                      <path d="M5 10h10v3H5z" fill="#5a8a5a" />
                      <path d="M10 9l2-5" stroke="#222" />
                      <path d="M2 16c0 4 2 6 6 6" stroke="#0000c0" strokeWidth="1.4" />
                      <path d="M18 16c0 4-2 6-6 6" stroke="#e01010" strokeWidth="1.4" />
                      <path d="M6 19l3 3-3 3zM14 19l-3 3 3 3z" fill="#222" />
                    </Ico>
                  </SensorRow>
                  <ModeRow>
                    <ModeBtn>
                      <Ico w={20} h={16}>
                        <path d="M3 6c4-4 10-4 14 0l-2 6c-3 3-7 3-10 0z" fill="#555" />
                        <circle cx="10" cy="8" r="3" fill="#200" />
                        <circle cx="10" cy="8" r="1.500" fill="#a02030" />
                      </Ico>
                    </ModeBtn>
                    <ModeBtn>
                      <Ico w={26} h={22}>
                        <path d={wave(1, 25, 6, 3, 6)} stroke="#800080" strokeWidth="2" />
                        <path d="M9 11h8l-4 4z" fill="#111" />
                        <path d={wave(1, 25, 19, 2, 6)} stroke="#800080" />
                      </Ico>
                    </ModeBtn>
                    <ModeBtn $flat $w={29}>
                      <Ico w={20} h={24}>
                        <path d="M10 0l8 8h-5v8h5l-8 8-8-8h5V8H2z" fill="#0000e0" />
                        <path d="M8 5h4v14H8z" fill="#800080" />
                      </Ico>
                    </ModeBtn>
                    <ModeBtn>
                      <Ico w={24} h={20}>
                        <path d="M2 3h20M2 17h20" stroke="#111" />
                        <path d="M2 10h20" stroke="#111" strokeDasharray="3 2" />
                      </Ico>
                    </ModeBtn>
                    <FxLabel>fx</FxLabel>
                  </ModeRow>
                </ChannelWrap>
                <Knob>
                  <Dial
                    w={96}
                    h={76}
                    cx={46}
                    cy={46}
                    r={20}
                    value="0.9В"
                    size={22}
                    baseline={57}
                    pointer={[56, 53]}
                    marks={[
                      ["0.1В", 28, 66, "end"],
                      ["0.9В", 63, 66, "start"],
                    ]}
                  />
                </Knob>
              </GroupSplit>
            </Group>
            <Group $w={103}>
              <Legend>Частота</Legend>
              <Dial
                w={101}
                h={76}
                cx={45}
                cy={50}
                r={21}
                value="100K"
                size={22}
                baseline={60}
                pointer={[34, 34]}
                marks={[
                  ["250K", 45, 18, "middle"],
                  ["100K", 26, 27, "end"],
                  ["333K", 64, 27, "start"],
                  ["500K", 75, 40, "start"],
                  ["1К", 20, 73, "end"],
                  ["1M", 74, 72, "start"],
                ]}
              />
            </Group>
            <Group $w={135}>
              <Legend>Синхронизация</Legend>
              <SyncRow>
                <SyncIcon>
                  <Ico w={28} h={26}>
                    <path d="M3 4l10 9-10 9z" fill="#0000e0" />
                    <path d="M3 13h24" stroke="#0000e0" />
                    <path d="M6 24c10 0 6-22 18-22" stroke="#e01010" strokeWidth="1.2" />
                  </Ico>
                </SyncIcon>
                <SyncIcon>
                  <Ico w={28} h={26}>
                    <path d="M2 24h12V4h12" stroke="#fff" strokeWidth="1.5" />
                    <path d="M7 2l6 8H9v8H5v-8H1z" fill="#777" />
                  </Ico>
                </SyncIcon>
                <SyncIcon $pressed>
                  <Ico w={28} h={26}>
                    <path d="M2 4h8v20h14" stroke="#555" strokeWidth="1.5" />
                    <path d="M18 24l6-8h-4V6h-4v10h-4z" fill="#777" />
                  </Ico>
                </SyncIcon>
                <SyncIcon>
                  <Ico w={28} h={30}>
                    <path d="M2 4l10 9-10 9z" fill="#0000e0" />
                    <path d="M2 13h24" stroke="#0000e0" strokeDasharray="2 2" />
                    <path d="M5 24c10 0 6-22 16-22" stroke="#e01010" strokeWidth="1.2" />
                    <path d="M13 13l0 13 3-3 2 5 2-1-2-5 4 0z" fill="#ffe000" stroke="#111" strokeWidth=".6" />
                  </Ico>
                </SyncIcon>
              </SyncRow>
              <SyncRow2>
                <SyncCombo>
                  <ComboValue>2</ComboValue>
                  <ComboArrow $c="#808080" />
                </SyncCombo>
                <Ico w={26} h={16}>
                  <path d="M1 2l10 6-10 6zM25 2l-10 6 10 6z" fill="#808080" stroke="#fff" strokeWidth=".6" />
                  <path d="M9 7h8v2H9z" fill="#808080" />
                </Ico>
              </SyncRow2>
            </Group>
            <Group $w={132}>
              <Legend>Управление</Legend>
              <ControlGrid>
                <CtlBtn>
                  <Ico w={14} h={20}>
                    <path d="M2 2h4v16H2zM9 2h4v16H9z" fill="#a8a59e" stroke="#808080" />
                  </Ico>
                </CtlBtn>
                <CtlBtn $kind="green">
                  <Ico w={30} h={22}>
                    <path d="M1 10c3-10 7-10 10-5 3 6 5 16 10 14 4-2 6-5 8-9" stroke="#e01010" />
                  </Ico>
                </CtlBtn>
                <CtlBtn $kind="navy">
                  <Ico w={34} h={24}>
                    <path d={wave(1, 33, 7, 2.500, 8)} stroke="#e01010" />
                    <path d={wave(1, 33, 18, 2.500, 8)} stroke="#0000e0" />
                  </Ico>
                </CtlBtn>
                <StartBtn>
                  <svg width="10" height="20"><path d="M0 0l10 10L0 20z" fill="#16e016" /></svg>
                  <StartText>Пуск</StartText>
                </StartBtn>
              </ControlGrid>
            </Group>
          </Groups>
        </Toolbar>
        <StatusBar>
          <StatusCell>USB Осциллограф не подключен</StatusCell>
          <StatusRest />
        </StatusBar>
        <Taskbar>
          <BackBtn $w={73}>к</BackBtn>
          <FreeIcon $gap={25} $w={49}>{TaskIcons.folder}</FreeIcon>
          <TaskBtn $gap={9}>
            {TaskIcons.skype}
            Skype™ - t...
          </TaskBtn>
          <FreeIcon $gap={9} $w={50}>{TaskIcons.word}</FreeIcon>
          <TaskBtn $gap={9}>
            {TaskIcons.yandex}
            diamag-osc...
          </TaskBtn>
          <FreeIcon $gap={10} $w={49}>{TaskIcons.car}</FreeIcon>
          <TaskBtn $gap={9} $active>
            {TaskIcons.diamag}
            Diamag 2
          </TaskBtn>
          <FreeIcon $gap={9} $w={49}>{TaskIcons.scope}</FreeIcon>
          <TaskBtn $gap={10}>
            {TaskIcons.paint}
            Безымянн...
          </TaskBtn>
          <TaskBtn $gap={2}>
            {TaskIcons.stone}
            FastStone
          </TaskBtn>
          <FreeIcon $gap={12} $w={46}>{TaskIcons.green}</FreeIcon>
          <Lang>RU</Lang>
          <Tray>
            <TraySlot $w={10}>{TrayIcons[0]}</TraySlot>
            <TraySlot $w={40}>{TrayIcons[1]}</TraySlot>
            <TraySlot $w={34}>{TrayIcons[2]}</TraySlot>
            <TraySlot $w={37}>{TrayIcons[3]}</TraySlot>
            <TraySlot $w={36}>{TrayIcons[4]}</TraySlot>
            <TraySlot $w={36}>{TrayIcons[5]}</TraySlot>
            <Clock>
              <span>21:27</span>
              <span>15.03.2015</span>
            </Clock>
            <Desk />
          </Tray>
        </Taskbar>
        <WinStart>
          <svg width="22" height="24" viewBox="0 0 22 24">
            <path d="M2 5c3-2 6-2 9 0l-2 8c-3-2-6-2-9 0z" fill="#e85020" />
            <path d="M12 5c3 2 6 2 9 0l-2 8c-3 2-6 2-9 0z" fill="#70b830" />
            <path d="M0 14c3-2 6-2 8.500 0l-2 8c-3-2-6-2-8.500 0z" fill="#3090e0" />
            <path d="M9.500 14c3 2 6 2 9 0l-2 8c-3 2-6 2-9 0z" fill="#f0c020" />
          </svg>
          <StartLabel>Пуск</StartLabel>
        </WinStart>
        <Dropdown>
          <MenuRow>Система зажигания<SubArrow /></MenuRow>
          <MenuRow>ГРМ<SubArrow /></MenuRow>
          <MenuRow>Топливная система<SubArrow /></MenuRow>
          <MenuRow>Тест эффективности цилиндров<SubArrow /></MenuRow>
          <MenuRow>Экспресс-диагностика<SubArrow /></MenuRow>
          <MenuRow $hot>Электропитание<SubArrow $hot /></MenuRow>
          <MenuSep />
          <MenuRow>
            <MenuIconSlot>
              <DocIcon badge={<><circle cx="13" cy="15" r="5" fill="#30c030" /><path d="M11 15l2 2 3-4" stroke="#fff" /></>} />
            </MenuIconSlot>
            По умолчанию
          </MenuRow>
          <MenuRow>
            <MenuIconSlot>
              <DocIcon badge={<circle cx="13" cy="15" r="5" fill="#4070c0" />} />
            </MenuIconSlot>
            Последняя настройка
          </MenuRow>
          <MenuSep />
          <MenuRow>
            <MenuIconSlot>
              <DocIcon badge={<path d="M5 6l12 14M18 6L8 20" stroke="#a08030" strokeWidth="2" />} />
            </MenuIconSlot>
            Редактирование...
          </MenuRow>
          <MenuRow>
            <MenuIconSlot>
              <DocIcon badge={<><path d="M10 12h8v8h-8z" fill="#2040a0" /><path d="M12 12h4v3h-4z" fill="#fff" /></>} />
            </MenuIconSlot>
            Сохранить текущие настройки...
          </MenuRow>
        </Dropdown>
        <Submenu>
          <SubRow>СР-08 600 А</SubRow>
          <SubRow $hot>APPA 32 600 А</SubRow>
        </Submenu>
      </Page>
    </>
  );
}
